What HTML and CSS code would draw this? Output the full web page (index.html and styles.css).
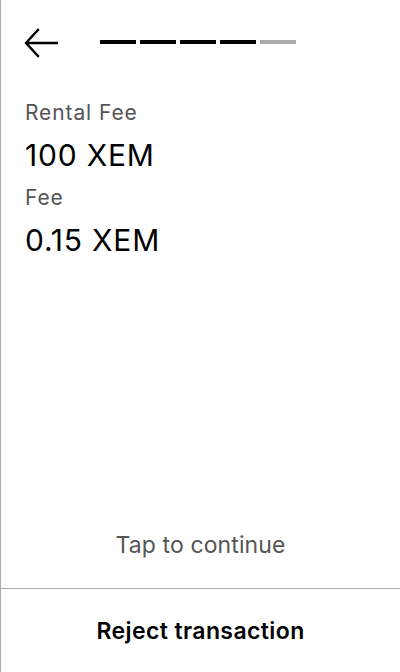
FILE: index.html
```html
<!DOCTYPE html>
<html>
<head>
<meta charset="utf-8">
<link rel="stylesheet" href="styles.css">
</head>
<body>
<div class="screen">
  <header class="header">
    <svg class="back" width="34" height="30" viewBox="0 0 34 30">
      <path d="M33 15H3M14 2L2 15L14 28" fill="none" stroke="#000" stroke-width="2.4" stroke-linecap="square"/>
    </svg>
    <div class="progress">
      <span class="seg on"></span><span class="seg on"></span><span class="seg on"></span><span class="seg on"></span><span class="seg"></span>
    </div>
  </header>
  <main class="content">
    <div class="label">Rental Fee</div>
    <div class="value">100 XEM</div>
    <div class="label">Fee</div>
    <div class="value">0.15 XEM</div>
  </main>
  <div class="tap">Tap to continue</div>
  <button class="reject">Reject transaction</button>
</div>
</body>
</html>
```
FILE: styles.css
```css
html, body {
  margin: 0;
  padding: 0;
  background: #fff;
}
body {
  font-family: Inter, "Noto Sans", sans-serif;
  color: #000;
}
.screen {
  box-sizing: border-box;
  width: 400px;
  height: 672px;
  border-left: 1px solid #aaa;
  display: flex;
  flex-direction: column;
}
.header {
  height: 86px;
  display: flex;
  align-items: center;
  padding-left: 23px;
  box-sizing: border-box;
}
.back {
  display: block;
}
.progress {
  display: flex;
  gap: 4px;
  margin-left: 42px;
  margin-top: -2px;
}
.seg {
  width: 36px;
  height: 4px;
  background: #aaa;
}
.seg.on {
  background: #000;
}
.content {
  flex: 1;
  padding: 15px 24px 0;
}
.label {
  font-size: 21px;
  line-height: 24px;
  letter-spacing: 0.9px;
  color: #555;
  margin-bottom: 11px;
}
.value {
  font-size: 30px;
  line-height: 38px;
  letter-spacing: 0.8px;
  margin-bottom: 12px;
}
.tap {
  text-align: center;
  font-size: 23px;
  line-height: 28px;
  letter-spacing: 0.1px;
  color: #555;
  padding-bottom: 29px;
  border-bottom: 1px solid #aaa;
}
.reject {
  height: 83px;
  border: 0;
  background: #fff;
  font-family: Inter, "Noto Sans", sans-serif;
  font-size: 23px;
  font-weight: 600;
  letter-spacing: 0.4px;
  color: #000;
  padding: 0;
  width: 100%;
}
```
